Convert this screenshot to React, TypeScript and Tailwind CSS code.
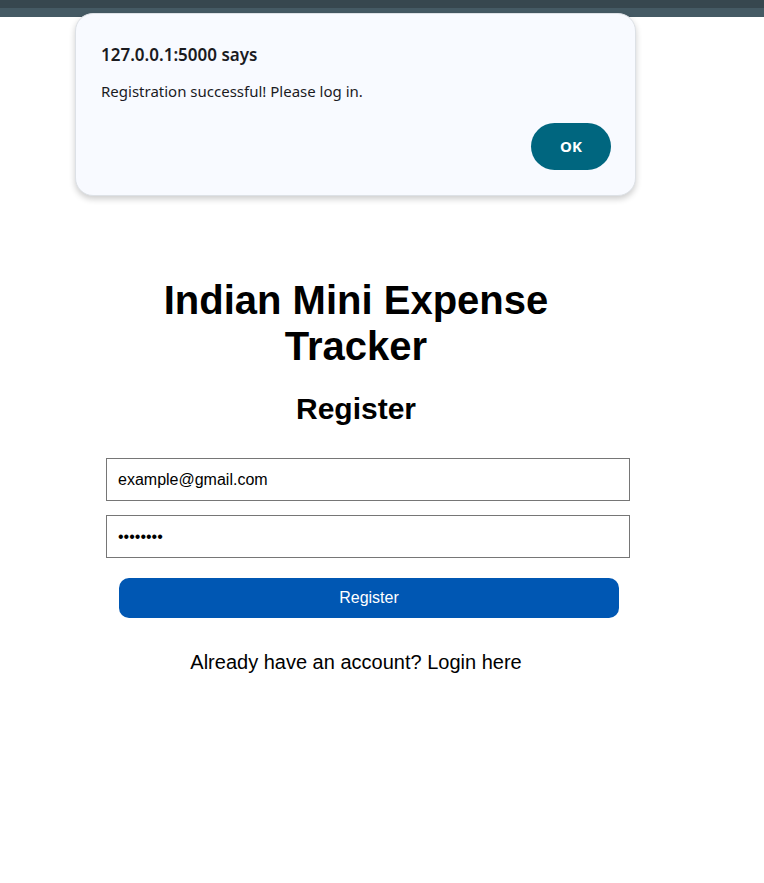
const App = () => {
  return (
    <div className="relative min-h-[883px] bg-white font-['Liberation_Sans',Arial,sans-serif] text-black">
      <div className="h-[8px] bg-[#37474f]" />
      <div className="h-[9px] bg-[#455a64]" />

      <div className="ml-[106px] w-[500px] pt-[260px]">
        <h1 className="text-center text-[40px] font-bold leading-[46px]">
          Indian Mini Expense Tracker
        </h1>
        <h2 className="mt-[22px] text-center text-[30px] font-bold leading-[36px]">
          Register
        </h2>
        <form className="mt-[31px] flex flex-col">
          <input
            type="email"
            defaultValue="example@gmail.com"
            className="h-[43px] w-[524px] border border-[#767676] px-[11px] text-[16px] text-black outline-none"
          />
          <input
            type="password"
            defaultValue="password"
            className="mt-[14px] h-[43px] w-[524px] border border-[#767676] px-[11px] text-[16px] text-black outline-none"
          />
          <button
            type="button"
            className="ml-[13px] mt-[20px] h-[40px] w-[500px] rounded-[10px] bg-[#0057b3] text-[16px] text-white"
          >
            Register
          </button>
        </form>
        <p className="mt-[32px] text-center text-[20px] leading-[24px]">
          Already have an account? Login here
        </p>
      </div>

      <div className="absolute left-[75px] top-[13px] flex h-[183px] w-[561px] flex-col rounded-[18px] border border-[#dde1e6] bg-[#f8faff] px-[25px] pt-[29px] font-['Noto_Sans',sans-serif] shadow-[0_3px_6px_rgba(0,0,0,0.2)]">
        <p className="text-[17px] font-semibold leading-[24px] text-[#1b1b1f]">127.0.0.1:5000 says</p>
        <p className="mt-[14px] text-[15px] leading-[20px] text-[#1b1b1f]">
          Registration successful! Please log in.
        </p>
        <div className="-mr-[1px] mt-[22px] flex justify-end">
          <button className="h-[47px] w-[80px] rounded-full bg-[#00667f] text-[15px] font-bold text-white">
            OK
          </button>
        </div>
      </div>
    </div>
  );
};

export default App;
